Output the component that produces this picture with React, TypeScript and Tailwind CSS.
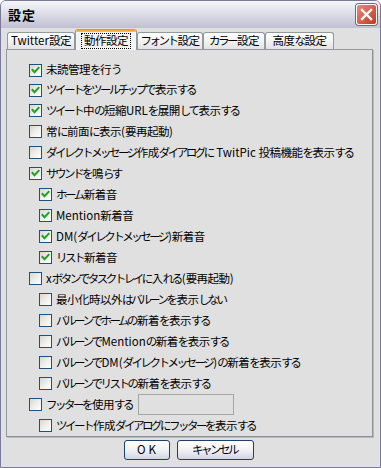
import React from "react";

type Row = { label: string; checked: boolean; lvl: 0 | 1; h: string; extra?: boolean };

const rows: Row[] = [
  { label: "未読管理を行う", checked: true, lvl: 0, h: "h-[20px]" },
  { label: "ツイートをツールチップで表示する", checked: true, lvl: 0, h: "h-[20px]" },
  { label: "ツイート中の短縮URLを展開して表示する", checked: true, lvl: 0, h: "h-[21px]" },
  { label: "常に前面に表示(要再起動)", checked: false, lvl: 0, h: "h-[21px]" },
  { label: "ダイレクトメッセージ作成ダイアログに TwitPic 投稿機能を表示する", checked: false, lvl: 0, h: "h-[21px]" },
  { label: "サウンドを鳴らす", checked: true, lvl: 0, h: "h-[21px]" },
  { label: "ホーム新着音", checked: true, lvl: 1, h: "h-[21px]" },
  { label: "Mention新着音", checked: true, lvl: 1, h: "h-[21px]" },
  { label: "DM(ダイレクトメッセージ)新着音", checked: true, lvl: 1, h: "h-[21px]" },
  { label: "リスト新着音", checked: true, lvl: 1, h: "h-[21px]" },
  { label: "xボタンでタスクトレイに入れる(要再起動)", checked: false, lvl: 0, h: "h-[21px]" },
  { label: "最小化時以外はバルーンを表示しない", checked: false, lvl: 1, h: "h-[21px]" },
  { label: "バルーンでホームの新着を表示する", checked: false, lvl: 1, h: "h-[21px]" },
  { label: "バルーンでMentionの新着を表示する", checked: false, lvl: 1, h: "h-[21px]" },
  { label: "バルーンでDM(ダイレクトメッセージ)の新着を表示する", checked: false, lvl: 1, h: "h-[21px]" },
  { label: "バルーンでリストの新着を表示する", checked: false, lvl: 1, h: "h-[21px]" },
  { label: "フッターを使用する", checked: false, lvl: 0, h: "h-[21px]", extra: true },
  { label: "ツイート作成ダイアログにフッターを表示する", checked: false, lvl: 1, h: "h-[21px]" },
];

function T({ s }: { s: string }) {
  const parts = s.split(/([\x00-\x7F]+|[\u3040-\u30FF]+)/).filter((p) => p.length > 0);
  return (
    <span className="whitespace-nowrap inline-flex items-center">
      {parts.map((p, i) => {
        if (/^[\x00-\x7F]+$/.test(p))
          return (
            <span key={i} className="tracking-normal whitespace-pre">
              {p}
            </span>
          );
        if (/^[\u3040-\u30FF]+$/.test(p))
          return (
            <span key={i} className="tracking-[-2.5px] mr-[1px]">
              {p}
            </span>
          );
        return (
          <span key={i} className="tracking-[-0.5px]">
            {p}
          </span>
        );
      })}
    </span>
  );
}

function Box({ checked }: { checked: boolean }) {
  return (
    <span className="w-[13px] h-[13px] border border-[#1c5180] bg-gradient-to-br from-[#d8d8d2] via-[#eeeeea] to-white flex items-center justify-center shrink-0">
      {checked && (
        <svg width="11" height="11" viewBox="0 0 11 11">
          <path d="M2.5 5 L4.5 7.2 L8.6 2.8" stroke="#21a121" strokeWidth="2" fill="none" strokeLinecap="square" />
        </svg>
      )}
    </span>
  );
}

const tabs = [
  { t: "Twitter設定", w: "w-[68px]" },
  { t: "動作設定", w: "w-[62px]" },
  { t: "フォント設定", w: "w-[66px]" },
  { t: "カラー設定", w: "w-[62px]" },
  { t: "高度な設定", w: "w-[69px]" },
];

export default function App() {
  return (
    <div className="w-[381px] h-[468px] bg-[#e0e0e0] font-['Noto_Sans_CJK_JP',sans-serif] text-[11.5px] text-black leading-none flex flex-col border border-[#7a7a96] rounded-t-[6px] overflow-hidden select-none">
      {/* title bar */}
      <div className="h-[27px] shrink-0 bg-gradient-to-b from-[#f6f6fa] via-[#dcdce6] to-[#c0c0d2] flex items-center pl-[7px] pr-[3px] justify-between">
        <span className="font-bold text-[13px] tracking-[1px]">設定</span>
        <div className="w-[21px] h-[21px] rounded-[3px] border border-white bg-gradient-to-br from-[#e88a7a] via-[#d8604a] to-[#b83a2a] flex items-center justify-center shadow-[0_0_0_1px_#b05050]">
          <svg width="13" height="13" viewBox="0 0 13 13">
            <path d="M2 2 L11 11 M11 2 L2 11" stroke="white" strokeWidth="2.4" strokeLinecap="square" />
          </svg>
        </div>
      </div>
      {/* body */}
      <div className="flex-1 flex flex-col px-[3px] border-x-2 border-b-2 border-[#e0e0ea]">
        {/* tabs */}
        <div className="h-[20px] flex items-end pl-[1px] mt-[1px] relative z-10">
          {tabs.map((tb, i) =>
            i === 1 ? (
              <div
                key={tb.t}
                className={`${tb.w} h-[21px] -mb-[1px] flex flex-col border-x border-[#919b9c] bg-[#f4f4f6] rounded-t-[3px] overflow-hidden`}
              >
                <div className="h-[3px] bg-gradient-to-b from-[#e68b2c] to-[#ffc83c] shrink-0" />
                <div className="flex-1 flex items-center justify-center">
                  <span className="border border-dotted border-black px-[2px] h-[16px] flex items-center">
                    <T s={tb.t} />
                  </span>
                </div>
              </div>
            ) : (
              <div
                key={tb.t}
                className={`${tb.w} h-[17px] flex items-center justify-center border border-b-0 border-[#919b9c] rounded-t-[3px] bg-gradient-to-b from-white via-[#f3f3f3] to-[#e2e2e6]`}
              >
                <T s={tb.t} />
              </div>
            )
          )}
        </div>
        {/* panel */}
        <div className="h-[388px] shrink-0 border border-[#919b9c] border-r-[#8a9293] border-b-[#8a9293] shadow-[1px_1px_0_#b8bcbc] bg-[#e0e0e0] pt-[10px] pl-[22px] mr-[2px] flex flex-col">
          {rows.map((r, i) => (
            <div key={i} className={`${r.h} flex items-center shrink-0 ${r.lvl === 1 ? "pl-[10px]" : ""}`}>
              <Box checked={r.checked} />
              <span className="ml-[4px]">
                <T s={r.label} />
              </span>
              {r.extra && <div className="ml-[5px] w-[96px] h-[21px] border border-[#a5a5a5] bg-[#e0e0e0]" />}
            </div>
          ))}
        </div>
        {/* buttons */}
        <div className="flex justify-center gap-[7px] mt-[3px] pr-[4px]">
          <button className="w-[46px] h-[20px] rounded-[3px] border border-[#1c3f6e] bg-gradient-to-b from-white via-[#f2f2f6] to-[#d4d4e2] flex items-center justify-center tracking-[3px] pl-[3px]">
            OK
          </button>
          <button className="w-[77px] h-[20px] rounded-[3px] border border-[#1c3f6e] bg-gradient-to-b from-white via-[#f2f2f6] to-[#d4d4e2] flex items-center justify-center">
            <T s="キャンセル" />
          </button>
        </div>
      </div>
    </div>
  );
}
